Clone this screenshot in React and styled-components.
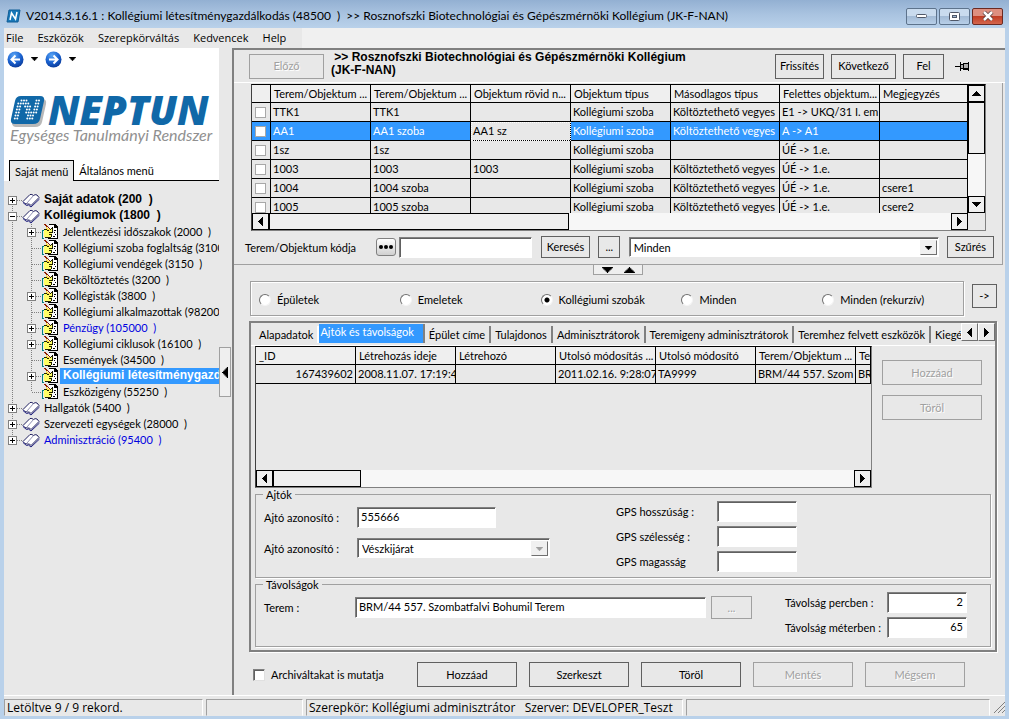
import React from 'react';
import styled, { createGlobalStyle, css } from 'styled-components';

const GlobalStyle = createGlobalStyle`
  * {
    box-sizing: border-box;
  }
  body {
    margin: 0;
    background: #b9d1ea;
    font: 11px/13px Lato, "Liberation Sans", sans-serif;
    color: #000000;
  }
  button, input, select {
    font: inherit;
    color: inherit;
    margin: 0;
  }
`;

const Window = styled.div`
  display: flex;
  flex-direction: column;
  min-height: 100vh;
  padding: 0 4px 4px;
  background: #b9d1ea;
`;

const TitleBar = styled.header`
  display: flex;
  align-items: center;
  height: 28px;
  margin: 0 -4px;
  padding: 4px 6px 0;
  gap: 5px;
  background: linear-gradient(#93b0d2, #a9c3e0 50%, #b9d1ea);
`;

const Title = styled.h1`
  flex: 1;
  margin: 0;
  font: 12px/16px Lato, sans-serif;
  white-space: pre;
`;

const WindowButtons = styled.div`
  display: flex;
  gap: 2px;
`;

const WindowButton = styled.button`
  display: flex;
  align-items: center;
  justify-content: center;
  width: 31px;
  height: 17px;
  padding: 0;
  border: 1px solid #5d738c;
  border-radius: 2px;
  background: linear-gradient(#c9dbee 45%, #a3bbd6 50%, #b8cfe8);
  ${props => props.$close && css`
    border-color: #6b2a22;
    background: linear-gradient(#dd8f80 45%, #c03d25 50%, #d4664c);
  `}
`;

const MenuBar = styled.nav`
  display: flex;
  height: 20px;
  background: #f0f0f0;
`;

const MenuItems = styled.div`
  display: flex;
  gap: 14px;
  width: 298px;
  padding: 1px 2px;
  background: #e8e8e8;
`;

const MenuItem = styled.button`
  padding: 0;
  border: 0;
  background: none;
  font: 11px/16px "Open Sans", sans-serif;
`;

const Body = styled.div`
  display: flex;
  flex: 1;
  background: #e8e8e8;
`;

const Sidebar = styled.aside`
  display: flex;
  flex-direction: column;
  width: 215px;
  overflow: hidden;
`;

const Brand = styled.div`
  height: 112px;
  padding: 2px 3px;
  background: #ffffff;
`;

const NavButtons = styled.div`
  display: flex;
  align-items: center;
  height: 18px;
  gap: 7px;
`;

const IconButton = styled.button`
  display: flex;
  padding: 0;
  border: 0;
  background: none;
`;

const Logo = styled.svg`
  display: block;
  margin-top: 26px;
`;

const MenuTabs = styled.div`
  display: flex;
  height: 21px;
  background: #ffffff;
  border-left: 5px solid #ffffff;
`;

const MenuTab = styled.button`
  padding: 0 5px;
  border: 1px solid #000000;
  border-width: ${props => (props.$active ? '1px 1px 0' : '0 0 1px')};
  background: ${props => (props.$active ? '#e8e8e8' : '#ffffff')};
  flex: ${props => (props.$active ? 'none' : 1)};
  text-align: left;
`;

const Tree = styled.ul`
  list-style: none;
  margin: 0;
  padding: 11px 0 0;
`;

const Node = styled.li`
  display: flex;
  height: 16px;
  color: ${props => (props.$blue ? '#0000e0' : '#000000')};
  ${props => props.$bold && css`
    font-family: "Liberation Sans", sans-serif;
    font-weight: bold;
    font-size: 12px;
  `}
  svg {
    flex: none;
  }
`;

const NodeLabel = styled.span`
  padding: 1px 2px 2px 3px;
  white-space: pre;
  ${props => props.$selected && css`
    color: #ffffff;
    background: #3399ff;
  `}
`;

const Splitter = styled.div`
  display: flex;
  align-items: flex-start;
  width: 13px;
  padding-top: 299px;
`;

const SplitterButton = styled.button`
  display: flex;
  align-items: center;
  justify-content: center;
  width: 12px;
  height: 50px;
  padding: 0;
  border: 1px solid #a0a0a0;
  background: #efefef;
`;

const Main = styled.main`
  flex: 1;
  min-width: 0;
  border-top: 2px solid #808080;
  border-left: 2px solid #808080;
`;

const Header = styled.div`
  display: flex;
  align-items: center;
  height: 33px;
  padding: 0 35px 0 15px;
  gap: 7px;
  border-bottom: 1px solid #ffffff;
`;

const Heading = styled.h2`
  flex: 1;
  min-width: 0;
  margin: 0;
  padding-bottom: 4px;
  font: bold 12px/13px "Liberation Sans", sans-serif;
  white-space: pre-wrap;
`;

const PushButton = styled.button`
  flex: none;
  width: ${props => props.$width}px;
  height: ${props => props.$height || 25}px;
  padding: 0 0 1px;
  border: 1px solid #606060;
  background: #e8e8e8;
  &:disabled {
    color: #a0a0a0;
    border-color: #a0a0a0;
    text-shadow: 1px 1px #ffffff;
  }
`;

const PinButton = styled(IconButton)`
  padding-left: 4px;
`;

const UpperPanel = styled.section`
  padding: 1px 16px 6px 17px;
  border-right: 1px solid #a0a0a0;
  border-bottom: 1px solid #a0a0a0;
  margin-right: 2px;
`;

const GridFrame = styled.div`
  display: grid;
  grid-template-columns: minmax(0, 1fr) ${props => (props.$vertical ? 17 : 0)}px;
  grid-template-rows: ${props => props.$height}px 17px;
  border: 1px solid #808080;
  border-top-color: #000000;
  border-left-color: #404040;
`;

const GridView = styled.div`
  overflow: hidden;
`;

const Table = styled.table`
  table-layout: fixed;
  width: 100%;
  border-spacing: 0;
`;

const Cell = styled.td`
  height: 19px;
  padding: 0 2px 2px;
  border-right: 1px solid #000000;
  border-bottom: 1px solid #000000;
  overflow: hidden;
  white-space: nowrap;
  text-align: ${props => (props.$right ? 'right' : 'left')};
  ${props => props.$focused && css`
    color: #000000;
    background: #e8e8e8;
    outline: 1px dotted #ffffff;
    outline-offset: -1px;
  `}
`;

const HeadCell = styled(Cell).attrs({ as: 'th', scope: 'col' })`
  height: 18px;
  padding: 0 3px;
  background: #efefef;
  font-weight: normal;
`;

const Row = styled.tr`
  ${props => props.$selected && css`
    color: #ffffff;
    background: #3399ff;
  `}
`;

const Bar = styled.div`
  display: flex;
  flex-direction: ${props => (props.$vertical ? 'column' : 'row')};
  background: #f7f7f7;
`;

const BarButton = styled.button`
  display: flex;
  align-items: center;
  justify-content: center;
  flex: none;
  width: 17px;
  height: 17px;
  padding: 0;
  border: 1px solid #000000;
  background: #efefef;
`;

const Thumb = styled.div`
  width: ${props => (props.$vertical ? '17px' : props.$size)};
  height: ${props => (props.$vertical ? props.$size : '17px')};
  border: 1px solid #000000;
  background: #efefef;
`;

const Spacer = styled.div`
  flex: ${props => (props.$size ? `0 0 ${props.$size}px` : 1)};
`;

const CheckBox = styled.input.attrs({ type: 'checkbox' })`
  appearance: none;
  display: block;
  width: ${props => (props.$sunken ? 12 : 11)}px;
  height: ${props => (props.$sunken ? 12 : 11)}px;
  border: 1px solid #a8a8a8;
  background: #ffffff;
  ${props => props.$sunken && css`
    border-color: #808080 #e0e0e0 #e0e0e0 #808080;
    box-shadow: inset 1px 1px #606060;
  `}
`;

const CheckCell = styled(Cell)`
  padding: 0 3px;
`;

const SearchRow = styled.div`
  display: flex;
  align-items: center;
  margin: 5px -8px 0 -6px;
`;

const SearchLabel = styled.label`
  width: 131px;
`;

const DotsButton = styled.button`
  display: flex;
  align-items: center;
  justify-content: center;
  width: 20px;
  height: 18px;
  margin-right: 3px;
  padding: 0;
  border: 1px solid #808080;
  border-radius: 3px;
  background: linear-gradient(#ffffff, #d0d0d0);
`;

const sunken = css`
  border: 1px solid;
  border-color: #808080 #ffffff #ffffff #808080;
  box-shadow: inset 1px 1px #606060;
  background: #ffffff;
`;

const TextInput = styled.input.attrs({ type: 'text' })`
  width: ${props => props.$width}px;
  height: 21px;
  padding: 1px 3px 3px;
  text-align: ${props => (props.$right ? 'right' : 'left')};
  ${sunken}
  ${props => props.$grow && css`
    flex: 1;
    min-width: 0;
  `}
`;

const SelectBox = styled.span`
  display: flex;
  height: 20px;
  padding: 2px 1px 1px 2px;
  ${sunken}
  width: ${props => props.$width}px;
  select {
    appearance: none;
    flex: 1;
    min-width: 0;
    padding: 0 2px;
    border: 0;
    background: none;
  }
`;

const DropArrow = styled.span`
  display: flex;
  align-items: center;
  justify-content: center;
  width: 17px;
  border: 1px solid;
  border-color: #f0f0f0 #707070 #707070 #f0f0f0;
  background: #f0f0f0;
`;

const Collapser = styled.div`
  display: flex;
  justify-content: space-around;
  align-items: center;
  width: 50px;
  height: 10px;
  margin-left: 359px;
  padding: 0 2px;
  border: 1px solid #a0a0a0;
  border-top: 0;
  background: #efefef;
`;

const LowerPanel = styled.section`
  display: flex;
  flex-direction: column;
  padding: 6px 8px 8px 15px;
`;

const ScopeRow = styled.div`
  display: flex;
  gap: 8px;
  > button {
    margin-top: 3px;
  }
`;

const ScopeGroup = styled.div`
  display: grid;
  grid-template-columns: repeat(5, 1fr);
  align-items: center;
  flex: 1;
  height: 35px;
  margin-left: 1px;
  padding: 2px 0 0 8px;
  border: 1px solid #a0a0a0;
  box-shadow: inset 1px 1px #ffffff, 1px 1px #ffffff;
`;

const RadioLabel = styled.label`
  display: flex;
  align-items: center;
  gap: 6px;
  white-space: nowrap;
`;

const Radio = styled.input.attrs({ type: 'radio' })`
  appearance: none;
  width: 12px;
  height: 12px;
  border: 1px solid;
  border-color: #707070 #f4f4f4 #f4f4f4 #707070;
  border-radius: 50%;
  background: #ffffff;
  &:checked {
    background: radial-gradient(circle, #000000 2px, #ffffff 3px);
  }
`;

const TabBox = styled.div`
  margin-top: 5px;
  border: 2px solid #808080;
  box-shadow: 1px 1px #ffffff;
`;

const TabRow = styled.div`
  display: flex;
  align-items: flex-start;
  height: 22px;
`;

const TabList = styled.div`
  display: flex;
  flex: 1;
  min-width: 0;
  overflow: hidden;
  padding: 1px 0 0 4px;
`;

const Tab = styled.button`
  flex: none;
  height: ${props => (props.$active ? 19 : 17)}px;
  margin-top: ${props => (props.$active ? 0 : 2)}px;
  padding: ${props => (props.$active ? '0 9px 4px 1px' : '0 4px')};
  border: 0;
  border-right: 2px solid ${props => (props.$first ? '#ffffff' : '#808080')};
  background: ${props => (props.$active ? '#3399ff' : '#e8e8e8')};
  color: ${props => (props.$active ? '#ffffff' : '#000000')};
  white-space: nowrap;
`;

const ArrowButton = styled.button`
  display: flex;
  align-items: center;
  justify-content: center;
  width: 17px;
  height: 18px;
  padding: 0;
  border: 1px solid;
  border-color: #ffffff #707070 #707070 #ffffff;
  background: #ececec;
`;

const TabBody = styled.div`
  padding: 0 4px 3px;
  border-top: 1px solid #ffffff;
`;

const DoorArea = styled.div`
  display: flex;
  gap: 10px;
  > :first-child {
    flex: 1;
    min-width: 0;
  }
`;

const SideButtons = styled.div`
  display: flex;
  flex-direction: column;
  gap: 10px;
  padding: 14px 9px 0 0;
`;

const Group = styled.fieldset`
  display: flex;
  min-width: 0;
  min-height: ${props => props.$height}px;
  margin: 0;
  padding: 0 23px 0 7px;
  border: 1px solid #a0a0a0;
  box-shadow: 1px 1px #ffffff;
  legend {
    height: 13px;
    padding: 0 3px;
  }
`;

const Fields = styled.div`
  display: flex;
  flex-direction: column;
  gap: ${props => props.$gap}px;
  padding-top: ${props => props.$top || 0}px;
  flex: ${props => (props.$grow ? 1 : 'none')};
  min-width: 0;
`;

const Field = styled.div`
  display: flex;
  align-items: center;
  label {
    flex: none;
    width: ${props => props.$label}px;
    padding-left: 1px;
    white-space: nowrap;
  }
`;

const Actions = styled.div`
  display: flex;
  align-items: center;
  gap: 12px;
  padding: 10px 32px 0 4px;
`;

const ArchiveLabel = styled.label`
  display: flex;
  align-items: center;
  gap: 6px;
  flex: 1;
`;

const StatusBar = styled.footer`
  display: flex;
  gap: 3px;
  height: 21px;
  padding-top: 3px;
  background: #e8e8e8;
  border-top: 1px solid #ffffff;
`;

const StatusCell = styled.div`
  flex: ${props => (props.$width ? `0 0 ${props.$width}px` : 1)};
  padding: 1px 2px;
  border: 1px solid;
  border-color: #a0a0a0 #ffffff #e8e8e8 #a0a0a0;
  font: 12px/14px "Open Sans", sans-serif;
  white-space: pre;
`;

const arrows = {
  down: 'M0 0h9v1h-1v1h-1v1h-1v1h-1v1h-1v-1h-1v-1h-1v-1h-1v-1h-1z',
  up: 'M4 0h1v1h1v1h1v1h1v1h1v1h-9v-1h1v-1h1v-1h1v-1h1z',
  left: 'M5 0v9h-1v-1h-1v-1h-1v-1h-1v-1h-1v-1h1v-1h1v-1h1v-1h1v-1z',
  right: 'M0 0v9h1v-1h1v-1h1v-1h1v-1h1v-1h-1v-1h-1v-1h-1v-1h-1v-1z',
};

function Arrow({ to, fill = '#000000', size = 9 }) {
  const flat = to === 'down' || to === 'up';
  const short = Math.ceil(size / 2);
  return (
    <svg
      width={flat ? size : short}
      height={flat ? short : size}
      viewBox={flat ? '0 0 9 5' : '0 0 5 9'}
      aria-hidden="true"
    >
      <path d={arrows[to]} fill={fill} />
    </svg>
  );
}

function RoundArrow({ flip }) {
  return (
    <svg width="17" height="17" viewBox="0 0 17 17" aria-hidden="true">
      <defs>
        <radialGradient id="ball" cx="40%" cy="25%" r="75%">
          <stop offset="0" stopColor="#5aa5f5" />
          <stop offset="0.6" stopColor="#1a62d0" />
          <stop offset="1" stopColor="#0b3c9c" />
        </radialGradient>
      </defs>
      <circle cx="8.5" cy="8.5" r="8" fill="url(#ball)" />
      <g transform={flip ? 'matrix(-1 0 0 1 17 0)' : undefined}>
        <path d="M13 8.5H5M8.5 4.5l-4 4 4 4" fill="none" stroke="#ffffff" strokeWidth="2" />
      </g>
    </svg>
  );
}

function Book() {
  return (
    <svg width="19" height="16" viewBox="0 0 19 16" aria-hidden="true">
      <path d="M1 9.500L8 2.500q2-0.500 3.500 1 1.500-1.500 3.500-0.500l2 2.500-8 8q-1-2-3.500-1.500Q3 12.500 1 9.500z" fill="#ffffff" stroke="#202060" />
      <path d="M11.500 3.500L5 11" stroke="#606090" strokeWidth="0.700" />
      <path d="M1 10.500l3.500 3 2-0.500 2.500 2L17.500 7" fill="none" stroke="#202080" />
    </svg>
  );
}

function Form() {
  return (
    <svg width="19" height="16" viewBox="0 0 19 16" aria-hidden="true" shapeRendering="crispEdges">
      <path d="M8 1h6l3 3v11H8z" fill="#ffffff" />
      <path d="M8 0h7v1h1v1h1v13H7v-1h9V4h-3V1H8z" fill="#000000" />
      <path d="M11 3h1v1h-1zM13 6h2v1h-2zM13 8h1v1h-1zM14 10h1v1h-1zM12 12h2v1h-2z" fill="#000000" />
      <path d="M3 6h5l3-2v2h1v3h-1v4H3z" fill="#ffff66" />
      <path d="M3 5h3v1H3zM6 6h2v1H6zM10 4h2v1h-2zM9 5h1v1H9zM8 8h4v1H8zM8 10h3v1H8zM4 13h6v1H4zM11 5h1v3h-1zM10 11h1v2h-1z" fill="#202000" />
      <path d="M3 0h2v1h1v1h1v1h1v1h1v1H8V4H7V3H5V2H4V1H3z" fill="#902000" />
      <path d="M5 3h1v1h1v1h2v1H6V5H5z" fill="#ffe040" />
      <path d="M1 6h2v1H2v7h1v1H1z" fill="#008080" />
    </svg>
  );
}

/* connector lines and the +/- box of a tree row */
function Gutter({ width = 18, x = 8, sign, up, down, stub }) {
  const dots = { stroke: '#808080', strokeDasharray: '1 1' };
  return (
    <svg width={width} height="16" aria-hidden="true" shapeRendering="crispEdges">
      {up && <path d={`M${x + 0.5} 0v8`} {...dots} />}
      {down && <path d={`M${x + 0.5} 8v8`} {...dots} />}
      {stub && <path d={`M${x + 1} 8.500H${width}`} {...dots} />}
      {sign && (
        <g>
          <rect x={x - 3.5} y="4.500" width="8" height="8" fill="#ffffff" stroke="#808080" />
          <path d={`M${x - 2} 8.500h5`} stroke="#000000" />
          {sign === '+' && <path d={`M${x + 0.5} 6v5`} stroke="#000000" />}
        </g>
      )}
    </svg>
  );
}

function AppIcon() {
  return (
    <svg width="15" height="14" viewBox="0 0 15 14" aria-hidden="true">
      <path d="M3 1h11l-2 12H1z" fill="#1878b8" stroke="#0f5d96" />
      <path d="M4 11l1.500-7 4 6L11 3" fill="none" stroke="#ffffff" strokeWidth="1.500" />
    </svg>
  );
}

const logoDots = [
  '011100011',
  '111110011',
  '110111011',
  '110011011',
  '110011111',
  '110001110',
  '110001110',
];

function NeptunLogo() {
  return (
    <Logo width="210" height="54" viewBox="0 0 210 54" role="img" aria-label="Neptun">
      <path d="M12 5h23q5 0 4 5l-4 18q-1 5-7 5H9q-3 0-4-3z" fill="#b8b8b8" />
      <path d="M14 2h19q5 0 4 5l-4 18q-1 5-7 5H8q-5 0-4-5L8 7q1-5 6-5z" fill="#1068a8" />
      {logoDots.map((row, r) => row.split('').map((on, c) => on === '1' && (
        <circle key={`${r}-${c}`} cx={12 + c * 2.5 - r * 0.7} cy={6.5 + r * 3} r="1" fill="#ffffff" />
      )))}
      <text x="41" y="31" fontFamily="Open Sans" fontWeight="800" fontStyle="italic" fontSize="40" fill="#1068a8">
        NEPTUN
      </text>
      <text x="3" y="47" fontFamily="Lato" fontStyle="italic" fontSize="16" fill="#909090">
        Egységes Tanulmányi Rendszer
      </text>
    </Logo>
  );
}

function Pin() {
  return (
    <svg width="15" height="11" viewBox="0 0 15 11" aria-hidden="true" shapeRendering="crispEdges">
      <path d="M0 5h5v1H0zM5 1h1v9H5zM6 3h2v1H6zM6 7h2v1H6zM8 2h5v1H8zM8 7h5v2H8zM13 1h1v9h-1zM8 3h1v4H8z" fill="#000000" />
      <path d="M6 4h2v3H6zM9 3h4v4H9z" fill="#b0b0b0" />
    </svg>
  );
}

function HorizontalBar({ size }) {
  return (
    <Bar>
      <BarButton aria-label="Balra"><Arrow to="left" /></BarButton>
      <Thumb $size={size} />
      <Spacer />
      <BarButton aria-label="Jobbra"><Arrow to="right" /></BarButton>
    </Bar>
  );
}

const tree = [
  { label: 'Saját adatok (200  )', bold: true, sign: '+', first: true },
  { label: 'Kollégiumok (1800  )', bold: true, sign: '-' },
  { label: 'Jelentkezési időszakok (2000  )', sub: true, sign: '+' },
  { label: 'Kollégiumi szoba foglaltság (3100', sub: true },
  { label: 'Kollégiumi vendégek (3150  )', sub: true },
  { label: 'Beköltöztetés (3200  )', sub: true },
  { label: 'Kollégisták (3800  )', sub: true, sign: '+' },
  { label: 'Kollégiumi alkalmazottak (98200', sub: true },
  { label: 'Pénzügy (105000  )', sub: true, sign: '+', blue: true },
  { label: 'Kollégiumi ciklusok (16100  )', sub: true, sign: '+' },
  { label: 'Események (34500  )', sub: true },
  { label: 'Kollégiumi létesítménygazdálkodás (48500  )', sub: true, sign: '+', bold: true, selected: true },
  { label: 'Eszközigény (55250  )', sub: true, last: true },
  { label: 'Hallgatók (5400  )', sign: '+' },
  { label: 'Szervezeti egységek (28000  )', sign: '+' },
  { label: 'Adminisztráció (95400  )', sign: '+', blue: true, last: true },
];

const roomColumns = [
  'Terem/Objektum ...',
  'Terem/Objektum ...',
  'Objektum rövid n...',
  'Objektum típus',
  'Másodlagos típus',
  'Felettes objektum...',
  'Megjegyzés',
];

const rooms = [
  ['TTK1', 'TTK1', '', 'Kollégiumi szoba', 'Költöztethető vegyes', 'E1 -> UKQ/31 I. em', ''],
  ['AA1', 'AA1 szoba', 'AA1 sz', 'Kollégiumi szoba', 'Költöztethető vegyes', 'A -> A1', ''],
  ['1sz', '1sz', '', 'Kollégiumi szoba', '', 'ÚÉ -> 1.e.', ''],
  ['1003', '1003', '1003', 'Kollégiumi szoba', 'Költöztethető vegyes', 'ÚÉ -> 1.e.', ''],
  ['1004', '1004 szoba', '', 'Kollégiumi szoba', 'Költöztethető vegyes', 'ÚÉ -> 1.e.', 'csere1'],
  ['1005', '1005 szoba', '', 'Kollégiumi szoba', 'Költöztethető vegyes', 'ÚÉ -> 1.e.', 'csere2'],
];

const doorColumns = [
  '_ID',
  'Létrehozás ideje',
  'Létrehozó',
  'Utolsó módosítás ...',
  'Utolsó módosító',
  'Terem/Objektum ...',
  'Te',
];

const door = ['167439602', '2008.11.07. 17:19:4', '', '2011.02.16. 9:28:07', 'TA9999', 'BRM/44 557. Szom', 'BR'];

const scopes = ['Épületek', 'Emeletek', 'Kollégiumi szobák', 'Minden', 'Minden (rekurzív)'];

const tabs = [
  'Alapadatok',
  'Ajtók és távolságok',
  'Épület címe',
  'Tulajdonos',
  'Adminisztrátorok',
  'Teremigeny adminisztrátorok',
  'Teremhez felvett eszközök',
  'Kiegé',
];

function TreeView() {
  return (
    <Tree>
      {tree.map(node => (
        <Node key={node.label} $bold={node.bold} $blue={node.blue}>
          <Gutter
            sign={node.sub ? undefined : node.sign}
            up={!node.first}
            down={node.sub || !node.last}
            stub={!node.sub}
          />
          {node.sub && <Gutter width={19} x={9} sign={node.sign} up down={!node.last} stub />}
          {node.sub ? <Form /> : <Book />}
          <NodeLabel $selected={node.selected}>{node.label}</NodeLabel>
        </Node>
      ))}
    </Tree>
  );
}

function RoomGrid() {
  return (
    <GridFrame $vertical $height={128}>
      <GridView>
        <Table>
          <colgroup>
            <col width="19" />
            <col width="100" />
            <col width="100" />
            <col width="100" />
            <col width="100" />
            <col width="109" />
            <col width="100" />
            <col />
          </colgroup>
          <thead>
            <tr>
              <HeadCell aria-label="Kijelölés" />
              {roomColumns.map((name, i) => <HeadCell key={i}>{name}</HeadCell>)}
            </tr>
          </thead>
          <tbody>
            {rooms.map((row, r) => (
              <Row key={row[0]} $selected={r === 1}>
                <CheckCell><CheckBox aria-label={row[0]} /></CheckCell>
                {row.map((text, c) => (
                  <Cell key={c} $focused={r === 1 && c === 2}>{text}</Cell>
                ))}
              </Row>
            ))}
          </tbody>
        </Table>
      </GridView>
      <Bar $vertical>
        <BarButton aria-label="Fel"><Arrow to="up" /></BarButton>
        <Thumb $vertical $size="52px" />
        <Spacer />
        <BarButton aria-label="Le"><Arrow to="down" /></BarButton>
      </Bar>
      <HorizontalBar size="300px" />
    </GridFrame>
  );
}

function DoorGrid() {
  return (
    <GridFrame $height={123}>
      <GridView>
        <Table>
          <colgroup>
            <col width="100" />
            <col width="100" />
            <col width="100" />
            <col width="100" />
            <col width="100" />
            <col width="100" />
            <col />
          </colgroup>
          <thead>
            <tr>{doorColumns.map(name => <HeadCell key={name}>{name}</HeadCell>)}</tr>
          </thead>
          <tbody>
            <Row>
              {door.map((text, c) => <Cell key={c} $right={c === 0}>{text}</Cell>)}
            </Row>
          </tbody>
        </Table>
      </GridView>
      <span />
      <HorizontalBar size="88px" />
    </GridFrame>
  );
}

export default function App() {
  return (
    <Window>
      <GlobalStyle />
      <TitleBar>
        <AppIcon />
        <Title>
          {'V2014.3.16.1 : Kollégiumi létesítménygazdálkodás (48500  )  >> Rosznofszki Biotechnológiai és Gépészmérnöki Kollégium (JK-F-NAN)'}
        </Title>
        <WindowButtons>
          <WindowButton aria-label="Kis méret">
            <svg width="11" height="5"><rect x="0.500" y="0.500" width="10" height="3" rx="1" fill="#ffffff" stroke="#505868" /></svg>
          </WindowButton>
          <WindowButton aria-label="Teljes méret">
            <svg width="11" height="9">
              <rect x="0.500" y="0.500" width="10" height="8" rx="1" fill="#ffffff" stroke="#505868" />
              <rect x="3.500" y="3.500" width="4" height="2" fill="#a3bbd6" stroke="#505868" />
            </svg>
          </WindowButton>
          <WindowButton $close aria-label="Bezárás">
            <svg width="12" height="10" viewBox="0 0 12 10">
              <path d="M2 1l8 8M10 1L2 9" stroke="#503838" strokeWidth="4" />
              <path d="M2 1l8 8M10 1L2 9" stroke="#ffffff" strokeWidth="2.500" />
            </svg>
          </WindowButton>
        </WindowButtons>
      </TitleBar>
      <MenuBar>
        <MenuItems>
          {['File', 'Eszközök', 'Szerepkörváltás', 'Kedvencek', 'Help'].map(name => (
            <MenuItem key={name}>{name}</MenuItem>
          ))}
        </MenuItems>
      </MenuBar>
      <Body>
        <Sidebar>
          <Brand>
            <NavButtons>
              <IconButton aria-label="Vissza"><RoundArrow /></IconButton>
              <IconButton aria-label="Előzmények"><Arrow to="down" size={7} /></IconButton>
              <IconButton aria-label="Előre"><RoundArrow flip /></IconButton>
              <IconButton aria-label="Következők"><Arrow to="down" size={7} /></IconButton>
            </NavButtons>
            <NeptunLogo />
          </Brand>
          <MenuTabs>
            <MenuTab $active>Saját menü</MenuTab>
            <MenuTab>Általános menü</MenuTab>
          </MenuTabs>
          <TreeView />
        </Sidebar>
        <Splitter>
          <SplitterButton aria-label="Menü elrejtése"><Arrow to="left" size={11} /></SplitterButton>
        </Splitter>
        <Main>
          <Header>
            <PushButton $width={75} disabled>Előző</PushButton>
            <Heading>{' >> Rosznofszki Biotechnológiai és Gépészmérnöki Kollégium\n(JK-F-NAN)'}</Heading>
            <PushButton $width={49}>Frissítés</PushButton>
            <PushButton $width={65}>Következő</PushButton>
            <PushButton $width={41}>Fel</PushButton>
            <PinButton aria-label="Rögzítés"><Pin /></PinButton>
          </Header>
          <UpperPanel>
            <RoomGrid />
            <SearchRow>
              <SearchLabel htmlFor="code">Terem/Objektum kódja</SearchLabel>
              <DotsButton aria-label="Mező választása">
                <svg width="14" height="4">
                  <circle cx="2" cy="2" r="2" />
                  <circle cx="7" cy="2" r="2" />
                  <circle cx="12" cy="2" r="2" />
                </svg>
              </DotsButton>
              <TextInput id="code" $width={133} />
              <Spacer $size={9} />
              <PushButton $width={49} $height={22}>Keresés</PushButton>
              <Spacer />
              <PushButton $width={22} $height={22}>...</PushButton>
              <Spacer />
              <SelectBox $width={310}>
                <select aria-label="Szűrő" defaultValue="Minden">
                  <option>Minden</option>
                </select>
                <DropArrow><Arrow to="down" size={7} /></DropArrow>
              </SelectBox>
              <Spacer />
              <PushButton $width={47} $height={22}>Szűrés</PushButton>
            </SearchRow>
          </UpperPanel>
          <Collapser>
            <Arrow to="down" size={11} />
            <Arrow to="up" size={11} />
          </Collapser>
          <LowerPanel>
            <ScopeRow>
              <ScopeGroup role="radiogroup">
                {scopes.map((name, i) => (
                  <RadioLabel key={name}>
                    <Radio name="scope" defaultChecked={i === 2} />
                    {name}
                  </RadioLabel>
                ))}
              </ScopeGroup>
              <PushButton $width={25} $height={24}>{'->'}</PushButton>
            </ScopeRow>
            <TabBox>
              <TabRow>
                <TabList role="tablist">
                  {tabs.map((name, i) => (
                    <Tab key={name} role="tab" aria-selected={i === 1} $active={i === 1} $first={i === 0}>{name}</Tab>
                  ))}
                </TabList>
                <ArrowButton aria-label="Előző fülek"><Arrow to="left" /></ArrowButton>
                <ArrowButton aria-label="További fülek"><Arrow to="right" /></ArrowButton>
              </TabRow>
              <TabBody>
                <DoorArea>
                  <DoorGrid />
                  <SideButtons>
                    <PushButton $width={100} disabled>Hozzáad</PushButton>
                    <PushButton $width={100} disabled>Töröl</PushButton>
                  </SideButtons>
                </DoorArea>
                <Group $height={90}>
                  <legend>Ajtók</legend>
                  <Fields $gap={10} $top={6} $grow>
                    <Field $label={94}>
                      <label htmlFor="door-id">Ajtó azonosító :</label>
                      <TextInput id="door-id" $width={139} defaultValue="555666" />
                    </Field>
                    <Field $label={94}>
                      <label htmlFor="door-type">Ajtó azonosító :</label>
                      <SelectBox $width={193}>
                        <select id="door-type" defaultValue="Vészkijárat">
                          <option>Vészkijárat</option>
                        </select>
                        <DropArrow><Arrow to="down" size={7} fill="#a0a0a0" /></DropArrow>
                      </SelectBox>
                    </Field>
                  </Fields>
                  <Fields $gap={4} $grow>
                    <Field $label={102}>
                      <label htmlFor="gps-long">GPS hosszúság :</label>
                      <TextInput id="gps-long" $width={80} />
                    </Field>
                    <Field $label={102}>
                      <label htmlFor="gps-lat">GPS szélesség :</label>
                      <TextInput id="gps-lat" $width={80} />
                    </Field>
                    <Field $label={102}>
                      <label htmlFor="gps-alt">GPS magasság</label>
                      <TextInput id="gps-alt" $width={80} />
                    </Field>
                  </Fields>
                </Group>
                <Group $height={69}>
                  <legend>Távolságok</legend>
                  <Fields $gap={4} $top={5} $grow>
                    <Field $label={92}>
                      <label htmlFor="room">Terem :</label>
                      <TextInput id="room" $grow defaultValue="BRM/44 557. Szombatfalvi Bohumil Terem" />
                      <Spacer $size={5} />
                      <PushButton $width={41} $height={23} disabled>...</PushButton>
                      <Spacer $size={32} />
                    </Field>
                  </Fields>
                  <Fields $gap={4} $top={1}>
                    <Field $label={103}>
                      <label htmlFor="minutes">Távolság percben :</label>
                      <TextInput id="minutes" $width={80} $right defaultValue="2" />
                    </Field>
                    <Field $label={103}>
                      <label htmlFor="meters">Távolság méterben :</label>
                      <TextInput id="meters" $width={80} $right defaultValue="65" />
                    </Field>
                  </Fields>
                </Group>
              </TabBody>
            </TabBox>
            <Actions>
              <ArchiveLabel>
                <CheckBox $sunken />
                Archiváltakat is mutatja
              </ArchiveLabel>
              <PushButton $width={100}>Hozzáad</PushButton>
              <PushButton $width={100}>Szerkeszt</PushButton>
              <PushButton $width={100}>Töröl</PushButton>
              <PushButton $width={100} disabled>Mentés</PushButton>
              <PushButton $width={100} disabled>Mégsem</PushButton>
            </Actions>
          </LowerPanel>
        </Main>
      </Body>
      <StatusBar>
        <StatusCell $width={199}>Letöltve 9 / 9 rekord.</StatusCell>
        <StatusCell $width={97}> </StatusCell>
        <StatusCell $width={377}>{'Szerepkör: Kollégiumi adminisztrátor   Szerver: DEVELOPER_Teszt'}</StatusCell>
        <StatusCell> </StatusCell>
        <svg width="12" height="14" aria-hidden="true">
          <path d="M1 14L12 3M5 14l7-7M9 14l3-3" stroke="#808080" />
        </svg>
      </StatusBar>
    </Window>
  );
}
